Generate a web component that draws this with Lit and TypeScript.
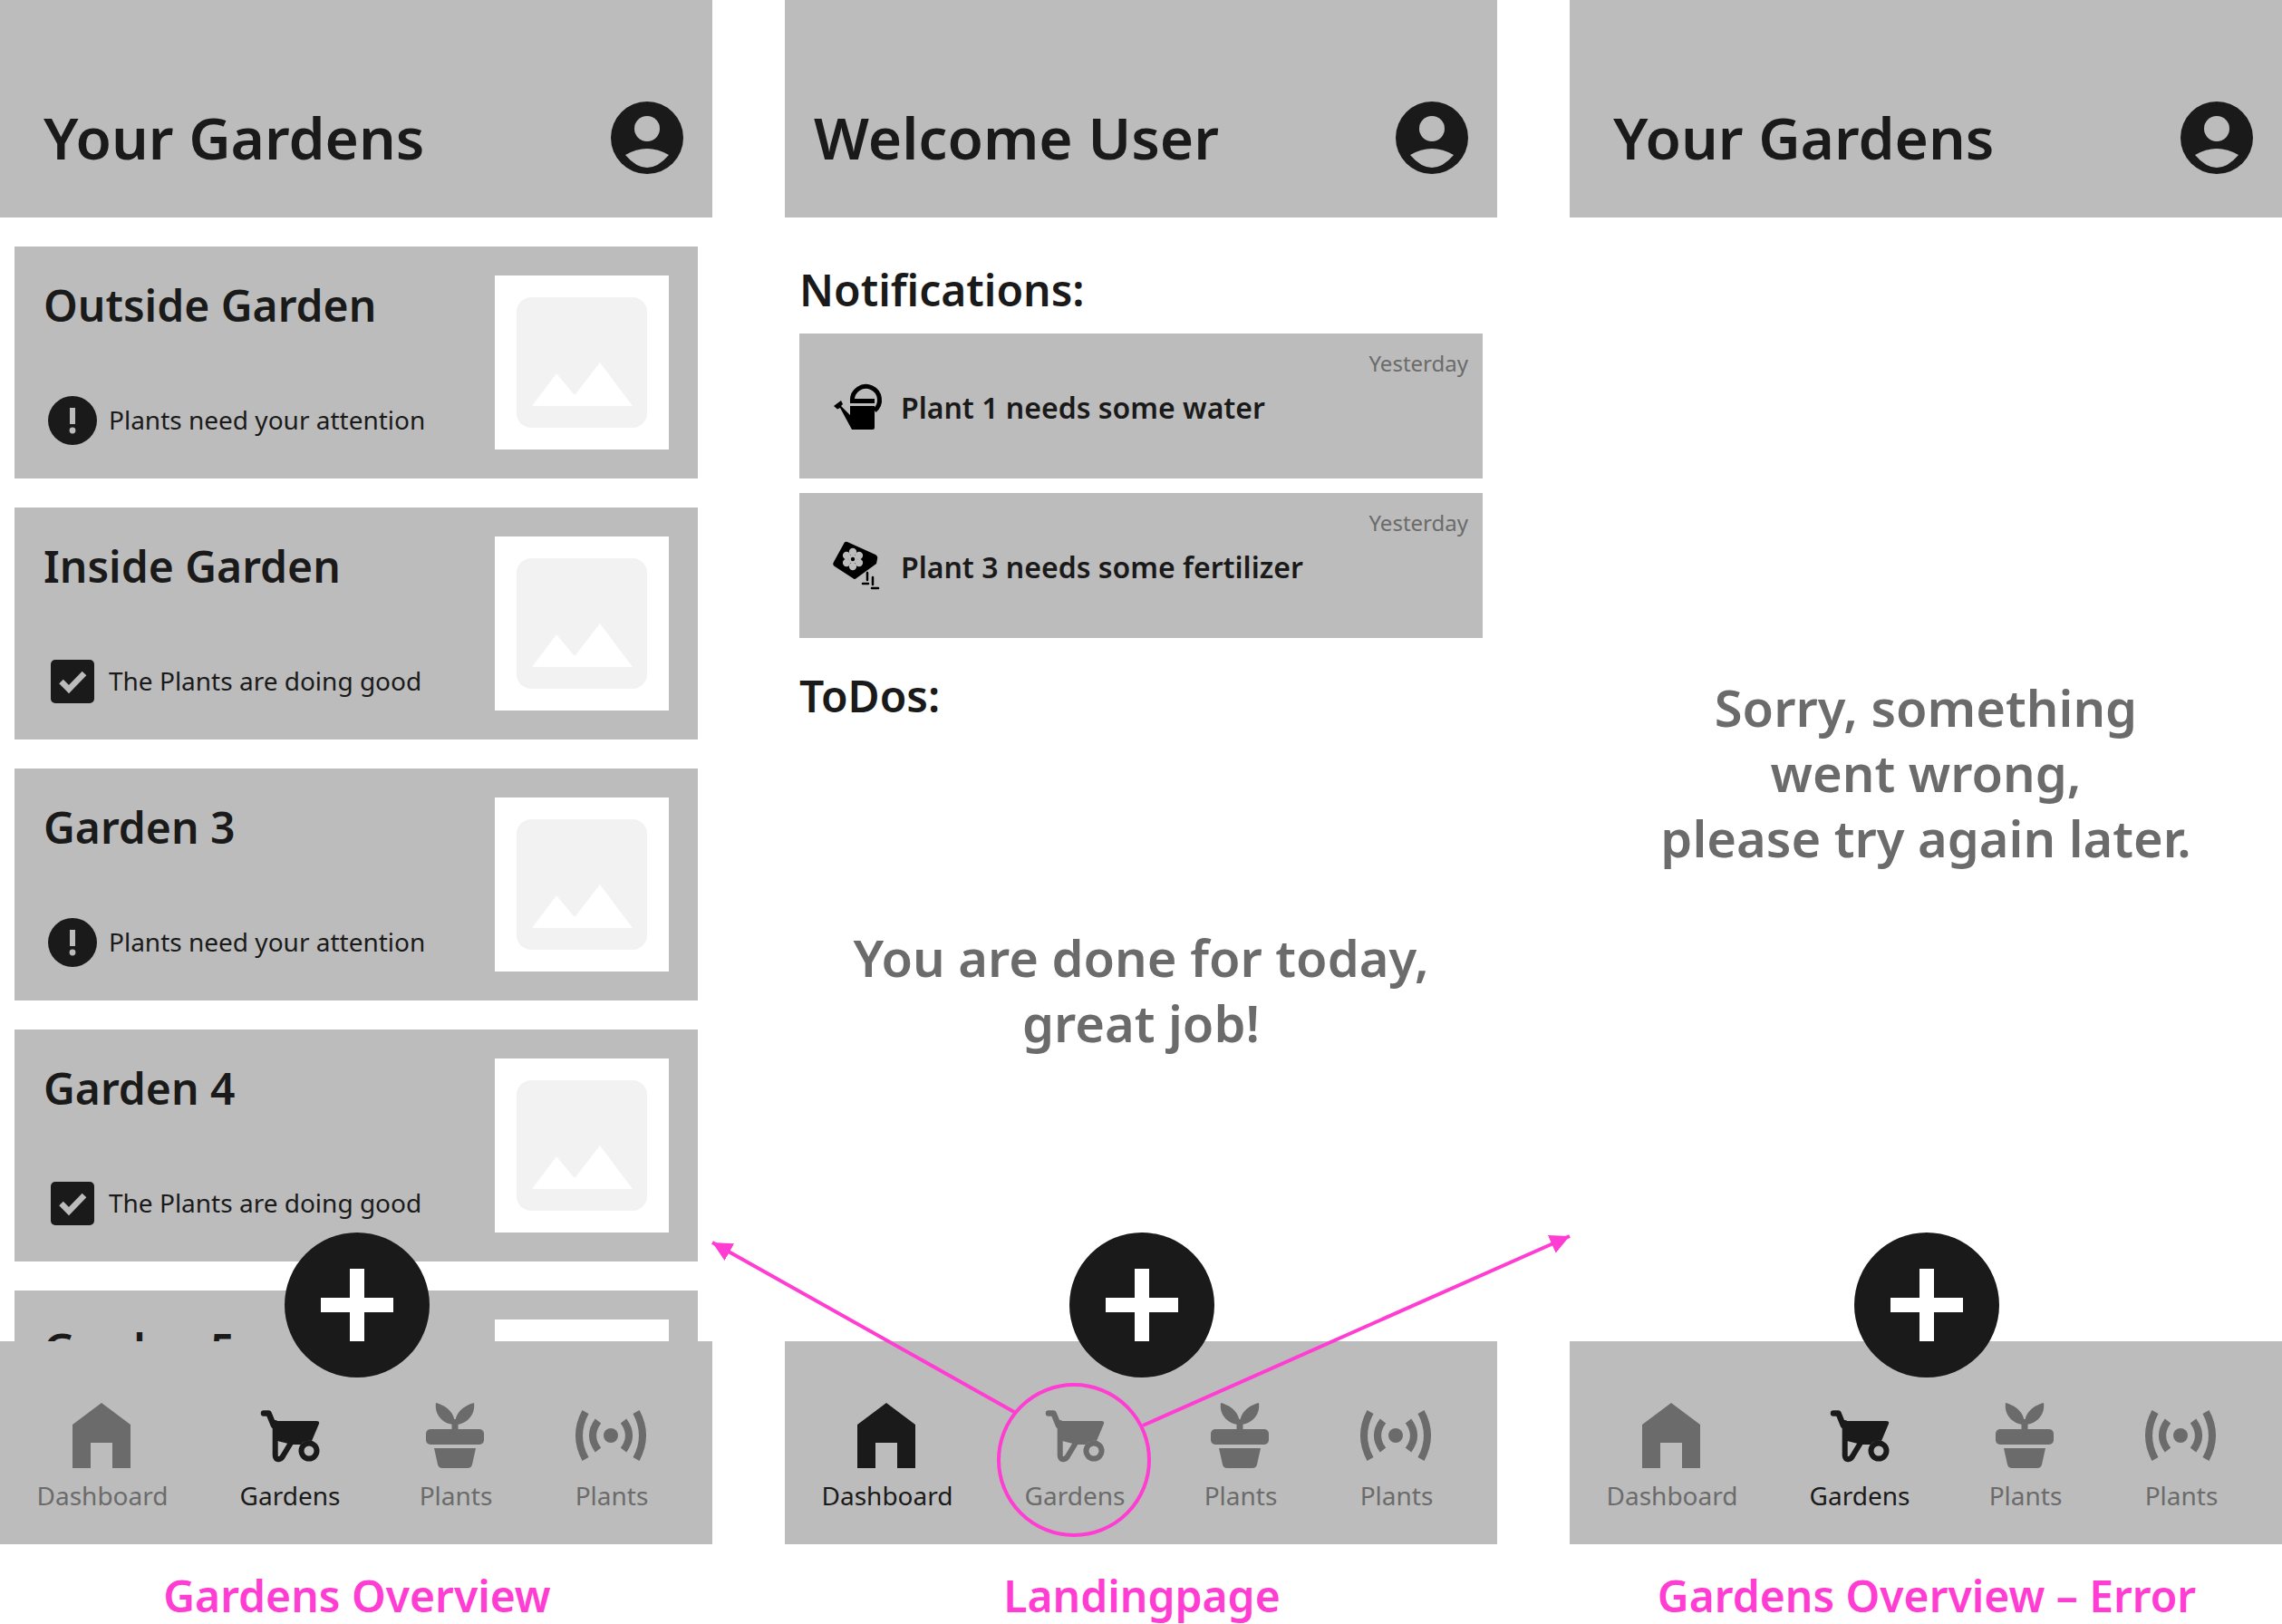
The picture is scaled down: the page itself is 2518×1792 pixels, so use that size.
import { LitElement, html, css, svg } from "lit";
import { customElement } from "lit/decorators.js";

interface Garden {
  name: string;
  ok: boolean;
}

const GARDENS: Garden[] = [
  { name: "Outside Garden", ok: false },
  { name: "Inside Garden", ok: true },
  { name: "Garden 3", ok: false },
  { name: "Garden 4", ok: true },
  { name: "Garden 5", ok: false },
];

const avatarIcon = html`<svg class="avatar" viewBox="0 0 80 80">
  <circle cx="40" cy="40" r="40" fill="#1a1a1a"></circle>
  <circle cx="40" cy="30" r="14" fill="#bcbcbc"></circle>
  <path d="M16 59Q40 45 64 59Q40 87 16 59Z" fill="#bcbcbc"></path>
</svg>`;

const alertIcon = html`<svg class="status-icon" viewBox="0 0 64 64">
  <circle cx="32" cy="32" r="27" fill="#1a1a1a"></circle>
  <rect x="29" y="18" width="6" height="18" fill="#bcbcbc"></rect>
  <circle cx="32" cy="43" r="3.4" fill="#bcbcbc"></circle>
</svg>`;

const checkIcon = html`<svg class="status-icon" viewBox="0 0 64 64">
  <rect x="8" y="8" width="48" height="48" rx="5" fill="#1a1a1a"></rect>
  <path d="M19.5 32L28 40.5L45 23" fill="none" stroke="#bcbcbc" stroke-width="6.5"></path>
</svg>`;

const placeholder = html`<div class="thumb">
  <svg viewBox="0 0 144 144" class="thumb-art">
    <rect width="144" height="144" rx="16" fill="#f2f2f2"></rect>
    <path d="M17 120L44 84L64 108L92 72L128 120Z" fill="#fff"></path>
  </svg>
</div>`;

const canIcon = html`<svg class="note-icon" viewBox="0 0 64 64">
  <path d="M26.5 24A15 15 0 1 1 51 35" fill="none" stroke="#000" stroke-width="5"></path>
  <rect x="24" y="22" width="27" height="5" fill="#000"></rect>
  <path d="M24 30H51V54Q51 56 49 56H26L13 32L10 33.5L6 30L14 24L16 28L14 30L24 40Z" fill="#000"></path>
</svg>`;

const PETALS = [0, 60, 120, 180, 240, 300];

const bagIcon = html`<svg class="note-icon" viewBox="0 0 64 64">
  <path d="M21 4L52 18Q55 20 54 23L53 28L31 44Q29 46 27 44L7 31Q4 29 6 26L17 6Q18 3 21 4Z" fill="#000"></path>
  <g fill="#bcbcbc">
    <circle cx="27" cy="23" r="5"></circle>
    ${PETALS.map(
      (a) => svg`<circle cx="${27 + 8 * Math.cos(((a + 30) * Math.PI) / 180)}" cy="${23 + 8 * Math.sin(((a + 30) * Math.PI) / 180)}" r="4.2"></circle>`
    )}
  </g>
  <circle cx="27" cy="23" r="2.2" fill="#000"></circle>
  <path d="M43 38V46M49 43V51M38 50H44M48 55H55" stroke="#000" stroke-width="2.5" stroke-linecap="round" fill="none"></path>
</svg>`;

const houseIcon = html`<svg class="nav-icon" viewBox="0 0 64 72">
  <path d="M32 0L64 24V72H44V44H20V72H0V24Z" fill="currentColor"></path>
</svg>`;

const cartIcon = html`<svg class="nav-icon" viewBox="0 0 64 56">
  <path d="M3 3.5H8.5L14 17" fill="none" stroke="currentColor" stroke-width="6.5" stroke-linecap="round" stroke-linejoin="round"></path>
  <path d="M14 12H61Q65 12 64 15L56 34Q48 33 44 38L34 38L18 34Z" fill="currentColor"></path>
  <path d="M15.7 14V50Q16 55 20 54Q22 54 24 51L33 36" fill="none" stroke="currentColor" stroke-width="6" stroke-linecap="round"></path>
  <circle cx="53" cy="45" r="8.5" fill="none" stroke="currentColor" stroke-width="6"></circle>
</svg>`;

const potIcon = html`<svg class="nav-icon" viewBox="0 0 64 72">
  <path d="M11 0C22 3 32 10 32 24C20 24 9 14 11 0ZM53 0C42 3 32 10 32 24C44 24 55 14 53 0Z" fill="currentColor"></path>
  <rect x="28.5" y="18" width="7" height="14" fill="currentColor"></rect>
  <rect x="0" y="29" width="64" height="17" rx="5" fill="currentColor"></rect>
  <path d="M9 50H55L51 68Q50 72 46 72H18Q14 72 13 68Z" fill="currentColor"></path>
</svg>`;

const signalIcon = html`<svg class="nav-icon" viewBox="0 0 78 56">
  <circle cx="39" cy="28" r="8" fill="currentColor"></circle>
  <g fill="none" stroke="currentColor" stroke-width="8">
    <path d="M11 2Q-3 28 11 54"></path>
    <path d="M67 2Q81 28 67 54"></path>
    <path d="M25 12Q13 28 25 44"></path>
    <path d="M53 12Q65 28 53 44"></path>
  </g>
</svg>`;

// icons and labels of the bottom bar, same order everywhere
const NAV = [
  { label: "Dashboard", icon: houseIcon },
  { label: "Gardens", icon: cartIcon },
  { label: "Plants", icon: potIcon },
  { label: "Plants", icon: signalIcon },
];

@customElement("app-root")
export class AppRoot extends LitElement {
  static styles = css`
    :host {
      display: block;
      position: relative;
      width: 2518px;
      height: 1792px;
      overflow: hidden;
      background: #fff;
      color: #1a1a1a;
      font-family: "Noto Sans", "Open Sans", sans-serif;
    }
    .screens {
      display: flex;
      gap: 80px;
    }
    .screen {
      width: 786px;
      flex: none;
      display: flex;
      flex-direction: column;
    }
    .frame {
      position: relative;
      height: 1704px;
      display: flex;
      flex-direction: column;
    }
    .header {
      flex: none;
      height: 240px;
      box-sizing: border-box;
      background: #bcbcbc;
      display: flex;
      align-items: flex-end;
      justify-content: space-between;
      padding: 0 32px 48px 48px;
    }
    .header.welcome {
      padding-left: 32px;
    }
    .header h1 {
      margin: 0;
      font-size: 64px;
      line-height: 80px;
      font-weight: 600;
    }
    .avatar {
      width: 80px;
      height: 80px;
      display: block;
    }
    .main {
      flex: 1;
      min-height: 0;
      overflow: hidden;
      display: flex;
      flex-direction: column;
    }
    .list {
      display: flex;
      flex-direction: column;
      gap: 32px;
      padding: 32px 16px;
    }
    .card {
      flex: none;
      height: 256px;
      box-sizing: border-box;
      padding: 32px;
      background: #bcbcbc;
      display: flex;
      justify-content: space-between;
    }
    .card-text {
      display: flex;
      flex-direction: column;
      justify-content: space-between;
    }
    .card-title {
      margin-top: 1px;
      font-size: 48px;
      line-height: 64px;
      font-weight: 600;
    }
    .status {
      display: flex;
      align-items: center;
      gap: 8px;
      font-size: 28px;
      line-height: 40px;
    }
    .status span {
      margin-bottom: 3px;
    }
    .status-icon {
      width: 64px;
      height: 64px;
      display: block;
    }
    .thumb {
      width: 192px;
      height: 192px;
      background: #fff;
      padding: 24px;
      box-sizing: border-box;
    }
    .thumb-art {
      width: 144px;
      height: 144px;
      display: block;
    }
    .section-title {
      margin: 0;
      padding-left: 16px;
      font-size: 48px;
      line-height: 64px;
      font-weight: 600;
    }
    .section-title.first {
      margin: 48px 0 16px;
    }
    .section-title.second {
      margin-top: 32px;
    }
    .notes {
      display: flex;
      flex-direction: column;
      gap: 16px;
      padding: 0 16px;
    }
    .note {
      height: 160px;
      box-sizing: border-box;
      padding: 17px 16px 0;
      background: #bcbcbc;
      display: flex;
      flex-direction: column;
    }
    .note-date {
      align-self: flex-end;
      font-size: 24px;
      line-height: 32px;
      color: #6b6b6b;
    }
    .note-row {
      display: flex;
      align-items: center;
      gap: 16px;
      margin-top: 1px;
      padding-left: 16px;
      font-size: 32px;
      line-height: 44px;
      font-weight: 600;
    }
    .note-icon {
      width: 64px;
      height: 64px;
      display: block;
    }
    .message {
      margin: 0;
      flex: 1;
      display: flex;
      align-items: center;
      justify-content: center;
      text-align: center;
      font-size: 56px;
      line-height: 72px;
      font-weight: 600;
      color: #6b6b6b;
    }
    .message.done {
      padding-bottom: 96px;
    }
    .message.error {
      padding-bottom: 16px;
    }
    .nav {
      flex: none;
      height: 224px;
      box-sizing: border-box;
      padding: 68px 0 0 8px;
      background: #bcbcbc;
      display: grid;
      grid-template-columns: 210px 204px 162px 182px;
      align-items: start;
    }
    .nav-item {
      display: flex;
      flex-direction: column;
      align-items: center;
      color: #6b6b6b;
      font-size: 28px;
      line-height: 40px;
    }
    .nav-item.active {
      color: #1a1a1a;
    }
    .nav-slot {
      height: 72px;
      margin-bottom: 10px;
      display: flex;
      align-items: center;
    }
    .nav-icon {
      display: block;
      overflow: visible;
    }
    .nav-item:nth-child(1) .nav-icon,
    .nav-item:nth-child(3) .nav-icon {
      width: 64px;
      height: 72px;
      margin-right: 2px;
    }
    .nav-item:nth-child(2) .nav-icon {
      width: 64px;
      height: 56px;
    }
    .nav-item:nth-child(4) .nav-icon {
      width: 78px;
      height: 56px;
      margin-right: 2px;
    }
    .fab {
      position: absolute;
      left: 314px;
      top: 1360px;
      width: 160px;
      height: 160px;
      border-radius: 50%;
      background: #1a1a1a;
    }
    .fab svg {
      display: block;
      width: 160px;
      height: 160px;
    }
    .caption {
      padding: 29px 0 0 2px;
      text-align: center;
      font-size: 48px;
      line-height: 56px;
      font-weight: 600;
      color: #ff3dd2;
    }
    .marks {
      position: absolute;
      left: 0;
      top: 0;
      width: 2518px;
      height: 1792px;
      pointer-events: none;
    }
  `;

  private renderHeader(title: string, extra = "") {
    return html`<div class="header ${extra}"><h1>${title}</h1>${avatarIcon}</div>`;
  }

  private renderNav(active: number) {
    return html`<div class="nav">
      ${NAV.map(
        (item, i) => html`<div class="nav-item ${i === active ? "active" : ""}">
          <div class="nav-slot">${item.icon}</div>
          <span>${item.label}</span>
        </div>`
      )}
    </div>`;
  }

  private renderFab() {
    return html`<div class="fab">
      <svg viewBox="0 0 160 160">
        <path d="M72 40H88V72H120V88H88V120H72V88H40V72H72Z" fill="#fff"></path>
      </svg>
    </div>`;
  }

  private renderGardens() {
    return html`<div class="list">
      ${GARDENS.map(
        (g) => html`<div class="card">
          <div class="card-text">
            <div class="card-title">${g.name}</div>
            <div class="status">
              ${g.ok ? checkIcon : alertIcon}
              <span>${g.ok ? "The Plants are doing good" : "Plants need your attention"}</span>
            </div>
          </div>
          ${placeholder}
        </div>`
      )}
    </div>`;
  }

  private renderLanding() {
    return html`
      <h2 class="section-title first">Notifications:</h2>
      <div class="notes">
        <div class="note">
          <div class="note-date">Yesterday</div>
          <div class="note-row">${canIcon}<span>Plant 1 needs some water</span></div>
        </div>
        <div class="note">
          <div class="note-date">Yesterday</div>
          <div class="note-row">${bagIcon}<span>Plant 3 needs some fertilizer</span></div>
        </div>
      </div>
      <h2 class="section-title second">ToDos:</h2>
      <p class="message done">You are done for today,<br />great job!</p>
    `;
  }

  private renderMarks() {
    return svg`
      <defs>
        <marker id="head" viewBox="0 0 6 6" markerWidth="5.4" markerHeight="5.4" refX="6" refY="3" orient="auto">
          <path d="M0 0L6 3L0 6Z" fill="#ff3dd2"></path>
        </marker>
      </defs>
      <g fill="none" stroke="#ff3dd2" stroke-width="4">
        <ellipse cx="1185" cy="1611" rx="83" ry="83"></ellipse>
        <path d="M1119 1558L786 1371" marker-end="url(#head)"></path>
        <path d="M1261 1573L1732 1364" marker-end="url(#head)"></path>
      </g>
    `;
  }

  render() {
    return html`
      <div class="screens">
        <div class="screen">
          <div class="frame">
            ${this.renderHeader("Your Gardens")}
            <div class="main">${this.renderGardens()}</div>
            ${this.renderNav(1)} ${this.renderFab()}
          </div>
          <div class="caption">Gardens Overview</div>
        </div>
        <div class="screen">
          <div class="frame">
            ${this.renderHeader("Welcome User", "welcome")}
            <div class="main">${this.renderLanding()}</div>
            ${this.renderNav(0)} ${this.renderFab()}
          </div>
          <div class="caption">Landingpage</div>
        </div>
        <div class="screen">
          <div class="frame">
            ${this.renderHeader("Your Gardens")}
            <div class="main">
              <p class="message error">Sorry, something<br />went wrong,<br />please try again later.</p>
            </div>
            ${this.renderNav(1)} ${this.renderFab()}
          </div>
          <div class="caption">Gardens Overview – Error</div>
        </div>
      </div>
      <svg class="marks" viewBox="0 0 2518 1792">${this.renderMarks()}</svg>
    `;
  }
}

declare global {
  interface HTMLElementTagNameMap {
    "app-root": AppRoot;
  }
}
